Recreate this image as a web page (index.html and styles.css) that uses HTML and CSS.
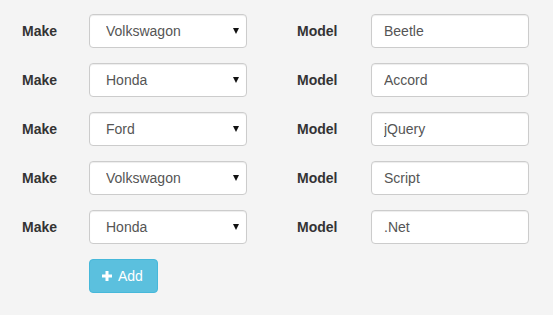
FILE: index.html
```html
<!DOCTYPE html>
<html lang="en">
<head>
    <meta charset="UTF-8">
    <meta name="viewport" content="width=device-width, initial-scale=1.0">
    <title>Cars</title>
    <link rel="stylesheet" href="styles.css">
</head>
<body>
    <div class="container">
        <div class="row">
            <label class="label">Make</label>
            <div class="select-wrap">
                <select>
                    <option>Volkswagon</option>
                    <option>Honda</option>
                    <option>Ford</option>
                </select>
            </div>
            <label class="label model">Model</label>
            <input type="text" value="Beetle">
        </div>
        <div class="row">
            <label class="label">Make</label>
            <div class="select-wrap">
                <select>
                    <option>Volkswagon</option>
                    <option selected>Honda</option>
                    <option>Ford</option>
                </select>
            </div>
            <label class="label model">Model</label>
            <input type="text" value="Accord">
        </div>
        <div class="row">
            <label class="label">Make</label>
            <div class="select-wrap">
                <select>
                    <option>Volkswagon</option>
                    <option>Honda</option>
                    <option selected>Ford</option>
                </select>
            </div>
            <label class="label model">Model</label>
            <input type="text" value="jQuery">
        </div>
        <div class="row">
            <label class="label">Make</label>
            <div class="select-wrap">
                <select>
                    <option>Volkswagon</option>
                    <option>Honda</option>
                    <option>Ford</option>
                </select>
            </div>
            <label class="label model">Model</label>
            <input type="text" value="Script">
        </div>
        <div class="row">
            <label class="label">Make</label>
            <div class="select-wrap">
                <select>
                    <option>Volkswagon</option>
                    <option selected>Honda</option>
                    <option>Ford</option>
                </select>
            </div>
            <label class="label model">Model</label>
            <input type="text" value=".Net">
        </div>
        <div class="actions">
            <button class="btn-add">
                <svg width="10" height="10" viewBox="0 0 10 10"><path d="M3.5 0h3v3.5H10v3H6.5V10h-3V6.5H0v-3h3.5z" fill="#fff"/></svg>
                Add
            </button>
        </div>
    </div>
</body>
</html>
```
FILE: styles.css
```css
body {
    font-family: "Liberation Sans", Arial, sans-serif;
    font-size: 14px;
    background: #f4f4f4;
    color: #333;
    margin: 0;
}

.container {
    padding: 14px 0 0 22px;
}

.row {
    display: grid;
    grid-template-columns: 67px 158px 50px 74px 158px;
    align-items: center;
    height: 34px;
    margin-bottom: 15px;
}

.label {
    font-weight: bold;
    color: #333;
}

.model {
    grid-column: 4;
}

.select-wrap {
    position: relative;
    height: 34px;
}

.select-wrap::after {
    content: "";
    position: absolute;
    right: 8px;
    top: 14px;
    border-left: 3px solid transparent;
    border-right: 3px solid transparent;
    border-top: 6px solid #111;
    pointer-events: none;
}

select, input {
    box-sizing: border-box;
    width: 158px;
    height: 34px;
    font-family: inherit;
    font-size: 14px;
    color: #555;
    background: #fff;
    border: 1px solid #ccc;
    border-radius: 4px;
    box-shadow: inset 0 1px 1px rgba(0, 0, 0, 0.075);
    margin: 0;
}

select {
    appearance: none;
    -webkit-appearance: none;
    padding: 0 20px 0 16px;
}

input {
    padding: 0 12px;
}

.actions {
    padding-left: 67px;
}

.btn-add {
    display: flex;
    align-items: center;
    gap: 6px;
    height: 34px;
    width: 69px;
    padding: 0 0 0 12px;
    font-family: inherit;
    font-size: 14px;
    color: #fff;
    background: #5bc0de;
    border: 1px solid #46b8da;
    border-radius: 4px;
    cursor: pointer;
}
```
